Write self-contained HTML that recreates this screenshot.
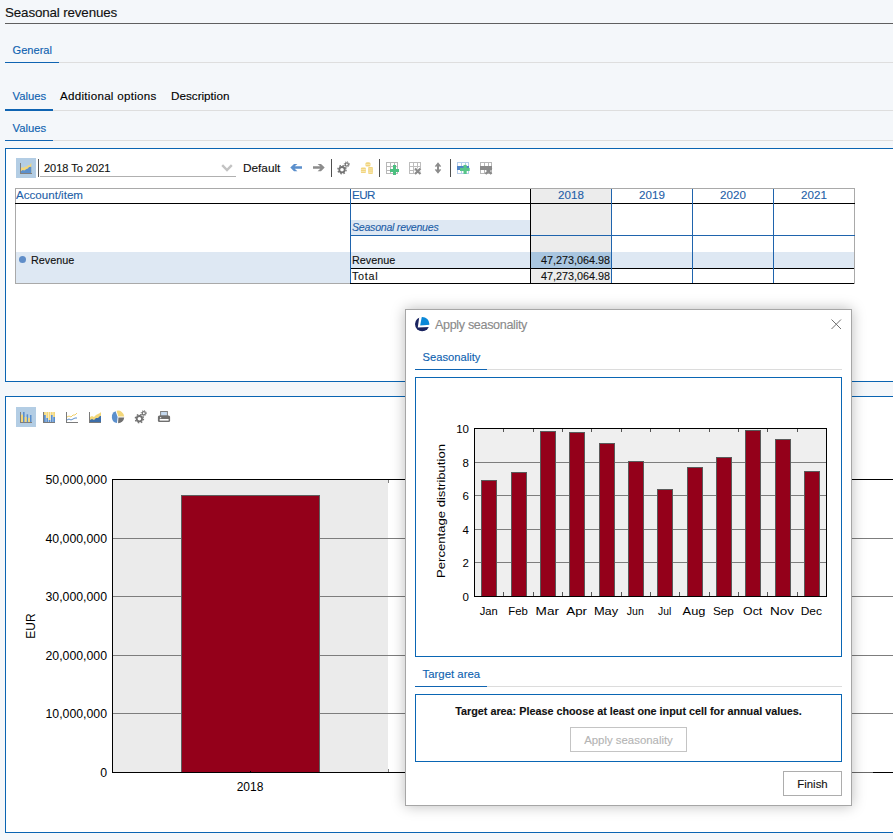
<!DOCTYPE html>
<html><head><meta charset="utf-8">
<style>
*{margin:0;padding:0;box-sizing:border-box}
html,body{width:893px;height:840px;overflow:hidden;background:#f4f7fa;font-family:"Liberation Sans",sans-serif;color:#111}
.a{position:absolute}
.t{position:absolute;white-space:pre;line-height:1;-webkit-text-stroke:0.12px currentColor}
.hl{position:absolute;height:1px}
.vl{position:absolute;width:1px}
.blue{color:#0e62b0}
</style></head><body>
<!-- header -->
<div class="t" style="left:5px;top:5.9px;font-size:13.4px;letter-spacing:-0.15px;color:#111">Seasonal revenues</div>
<div class="hl" style="left:5px;top:23px;width:888px;background:#5f5f5f"></div>

<div class="t blue" style="left:12.5px;top:44.5px;font-size:11.1px">General</div>
<div class="hl" style="left:5px;top:62px;width:888px;background:#dedede"></div>
<div class="hl" style="left:5px;top:62px;width:54px;background:#0f64b2"></div>

<div class="t blue" style="left:12.5px;top:90.5px;font-size:11.3px">Values</div>
<div class="t" style="left:60px;top:90.3px;font-size:11.6px;letter-spacing:0.28px;color:#000">Additional options</div>
<div class="t" style="left:171px;top:89.6px;font-size:11.7px;color:#000">Description</div>
<div class="hl" style="left:5px;top:110px;width:888px;background:#dedede"></div>
<div class="a" style="left:5px;top:109px;width:48px;height:2px;background:#0f64b2"></div>

<div class="t blue" style="left:12.5px;top:122.5px;font-size:11.3px">Values</div>
<div class="hl" style="left:5px;top:140px;width:888px;background:#dedede"></div>
<div class="hl" style="left:5px;top:140px;width:48px;background:#0f64b2"></div>

<!-- panel 1 -->
<div class="a" style="left:5px;top:148px;width:900px;height:234px;background:#fff;border:1px solid #0a64b2"></div>
<div class="a" style="left:16px;top:158px;width:20px;height:20px;background:#b3cde4"></div>
<div class="vl" style="left:38px;top:159px;height:18px;background:#555"></div>
<div class="t" style="left:44px;top:163.2px;font-size:11px">2018 To 2021</div>
<div class="hl" style="left:40px;top:176px;width:196px;background:#b0b0b0"></div>
<div class="t" style="left:243px;top:163.2px;font-size:11.8px">Default</div>

<!-- toolbar icons -->
<svg class="a" style="left:16px;top:158px" width="20" height="20">
<polygon points="5,10 6.5,9 7.8,10 9.5,8.3 11,9 12,7 13.5,7.5 15.3,4.8 15.3,15 5,15" fill="#f3d77a"/>
<polygon points="5,13.2 6.5,12 8.3,12.6 10.5,11 12,10.5 13,9 15.3,8.8 15.3,15 5,15" fill="#5b8fcc"/>
<rect x="4" y="5" width="1" height="11" fill="#7f7f7f" shape-rendering="crispEdges"/><rect x="4" y="15" width="12" height="1" fill="#7f7f7f" shape-rendering="crispEdges"/>
</svg>
<svg class="a" style="left:290px;top:163px" width="13" height="9" shape-rendering="auto">
<path d="M0.3 4.5 L4 0.9 H7.4 L4.7 3.2 H12 V5.8 H4.7 L7.4 8.3 H4 Z" fill="#5b8fcc"/>
</svg>
<svg class="a" style="left:313px;top:163px" width="13" height="9">
<path d="M11.7 4.5 L8 0.9 H4.6 L7.3 3.2 H0 V5.8 H7.3 L4.6 8.3 H8 Z" fill="#8c8c8c"/>
</svg>
<div class="vl" style="left:331px;top:159px;height:18px;background:#505050"></div>
<svg class="a" style="left:336px;top:160px" width="16" height="16">
<g fill="none" stroke="#737373">
<circle cx="6" cy="9.7" r="2.7" stroke-width="1.8"/>
<circle cx="6" cy="9.7" r="4.1" stroke-width="1.3" stroke-dasharray="1.6 1.62"/>
<circle cx="10.8" cy="4.4" r="1.6" stroke-width="1.2"/>
<circle cx="10.8" cy="4.4" r="2.6" stroke-width="1" stroke-dasharray="1 1.05"/>
</g></svg>
<svg class="a" style="left:359px;top:160px" width="16" height="16">
<g fill="#f1d57f">
<rect x="6.4" y="2.2" width="5.1" height="4.4" rx="1.5"/>
<rect x="1.9" y="7.6" width="5" height="5.5" rx="1.2"/>
<rect x="9.1" y="6.9" width="4.9" height="7.1" rx="1.2"/>
</g>
<g fill="#fbeec4">
<rect x="6.6" y="4" width="4.7" height="0.7"/>
<rect x="2.1" y="9.2" width="4.6" height="0.7"/><rect x="2.1" y="11.2" width="4.6" height="0.7"/>
<rect x="9.3" y="8.6" width="4.5" height="0.7"/><rect x="9.3" y="10.6" width="4.5" height="0.7"/><rect x="9.3" y="12.4" width="4.5" height="0.7"/>
</g></svg>
<div class="vl" style="left:379px;top:159px;height:18px;background:#505050"></div>
<svg class="a" style="left:386px;top:162px" width="14" height="14" shape-rendering="crispEdges">
<g fill="#b8b8b8"><rect x="0" y="0" width="12" height="1"/><rect x="0" y="4" width="12" height="1"/><rect x="0" y="8" width="12" height="1"/><rect x="0" y="11" width="12" height="1"/>
<rect x="0" y="0" width="1" height="12"/><rect x="4" y="0" width="1" height="12"/><rect x="8" y="0" width="1" height="12"/><rect x="11" y="0" width="1" height="12"/></g>
<rect x="7" y="3" width="3" height="10" fill="#4cbf80"/><rect x="4" y="6.5" width="9" height="3" fill="#4cbf80"/>
</svg>
<svg class="a" style="left:409px;top:162px" width="14" height="14">
<g fill="#bdbdbd" shape-rendering="crispEdges"><rect x="0" y="0" width="12" height="1"/><rect x="0" y="4" width="12" height="1"/><rect x="0" y="8" width="12" height="1"/><rect x="0" y="11" width="12" height="1"/>
<rect x="0" y="0" width="1" height="12"/><rect x="4" y="0" width="1" height="12"/><rect x="8" y="0" width="1" height="12"/><rect x="11" y="0" width="1" height="12"/></g>
<path d="M6 6.5 L11.5 12 M11.5 6.5 L6 12" stroke="#fff" stroke-width="3.6"/><path d="M6 6.5 L11.5 12 M11.5 6.5 L6 12" stroke="#8a8a8a" stroke-width="2.2"/>
</svg>
<svg class="a" style="left:434px;top:162px" width="8" height="12">
<path d="M4 0.3 L7.2 4.3 L5.9 5.1 L5 4.1 V7.9 L5.9 6.9 L7.2 7.7 L4 11.7 L0.8 7.7 L2.1 6.9 L3 7.9 V4.1 L2.1 5.1 L0.8 4.3 Z" fill="#8c8c8c"/>
</svg>
<div class="vl" style="left:450px;top:159px;height:18px;background:#505050"></div>
<svg class="a" style="left:457px;top:162px" width="14" height="14" shape-rendering="crispEdges">
<g fill="#b5cdea"><rect x="0" y="0" width="12" height="1"/><rect x="0" y="11" width="12" height="1"/>
<rect x="0" y="0" width="1" height="12"/><rect x="4" y="0" width="1" height="12"/><rect x="8" y="0" width="1" height="12"/><rect x="11" y="0" width="1" height="12"/></g>
<rect x="0" y="4" width="12" height="4" fill="#4f84c6"/>
<rect x="6.5" y="2.9" width="3.2" height="9.1" fill="#58c58a" shape-rendering="auto"/><rect x="3" y="5.9" width="9.7" height="3.1" fill="#58c58a" shape-rendering="auto"/>
</svg>
<svg class="a" style="left:480px;top:162px" width="14" height="14">
<g fill="#b8b8b8" shape-rendering="crispEdges"><rect x="0" y="0" width="12" height="1"/><rect x="0" y="11" width="12" height="1"/>
<rect x="0" y="0" width="1" height="12"/><rect x="4" y="0" width="1" height="12"/><rect x="8" y="0" width="1" height="12"/><rect x="11" y="0" width="1" height="12"/></g>
<rect x="0" y="4" width="12" height="4" fill="#8a8a8a" shape-rendering="crispEdges"/>
<path d="M5.5 6 L11.5 12 M11.5 6 L5.5 12" stroke="#8a8a8a" stroke-width="2.4"/>
</svg>
<svg class="a" style="left:221px;top:164px" width="12" height="8"><path d="M1.2 1.2 L6 6 L10.8 1.2" fill="none" stroke="#c3c3c3" stroke-width="2.4"/></svg>

<!-- table -->
<div class="a" style="left:15px;top:188px;width:840px;height:96px;border:1px solid #a9a9a9;background:#fff"></div>
<div class="a" style="left:531px;top:189px;width:80px;height:94px;background:#ececec"></div>
<div class="a" style="left:351px;top:220px;width:179px;height:15px;background:#dee8f3"></div>
<div class="a" style="left:16px;top:252px;width:838px;height:16px;background:#dee8f3"></div>
<div class="a" style="left:16px;top:268px;width:334px;height:15px;background:#dee8f3"></div>
<div class="a" style="left:531px;top:252px;width:80px;height:16px;background:#a9c6e0"></div>
<div class="hl" style="left:15px;top:203px;width:840px;background:#000"></div>
<div class="hl" style="left:350px;top:235px;width:505px;background:#1f64ad"></div>
<div class="hl" style="left:350px;top:268px;width:504px;background:#000"></div>
<div class="hl" style="left:350px;top:283px;width:504px;background:#000"></div>
<div class="vl" style="left:350px;top:189px;height:94px;background:#1f64ad"></div>
<div class="vl" style="left:530px;top:189px;height:94px;background:#000"></div>
<div class="vl" style="left:611px;top:189px;height:94px;background:#1f64ad"></div>
<div class="vl" style="left:692px;top:189px;height:94px;background:#1f64ad"></div>
<div class="vl" style="left:773px;top:189px;height:94px;background:#1f64ad"></div>
<div class="t" style="left:16px;top:189.3px;font-size:11.6px;color:#1f5fa8">Account/item</div>
<div class="t" style="left:352px;top:189.3px;font-size:11.6px;color:#1f5fa8;letter-spacing:-0.6px">EUR</div>
<div class="t" style="left:531px;top:189.3px;width:80px;text-align:center;font-size:11.6px;color:#1f5fa8">2018</div>
<div class="t" style="left:612px;top:189.3px;width:80px;text-align:center;font-size:11.6px;color:#1f5fa8">2019</div>
<div class="t" style="left:693px;top:189.3px;width:80px;text-align:center;font-size:11.6px;color:#1f5fa8">2020</div>
<div class="t" style="left:774px;top:189.3px;width:80px;text-align:center;font-size:11.6px;color:#1f5fa8">2021</div>
<div class="t" style="left:352px;top:222px;font-size:10.6px;font-style:italic;color:#1f5fa8;letter-spacing:-0.25px">Seasonal revenues</div>
<div class="a" style="left:18.5px;top:255.5px;width:7.5px;height:7.5px;border-radius:50%;background:#5f8dc8"></div>
<div class="t" style="left:31px;top:255px;font-size:10.8px">Revenue</div>
<div class="t" style="left:352px;top:255px;font-size:10.8px">Revenue</div>
<div class="t" style="left:352px;top:271px;font-size:10.8px;letter-spacing:0.7px">Total</div>
<div class="t" style="left:531px;top:255px;width:79px;text-align:right;font-size:10.8px">47,273,064.98</div>
<div class="t" style="left:531px;top:271px;width:79px;text-align:right;font-size:10.8px">47,273,064.98</div>

<!-- panel 2 -->
<div class="a" style="left:5px;top:396px;width:900px;height:437px;background:#fff;border:1px solid #0a64b2"></div>
<div class="a" style="left:16px;top:407px;width:20px;height:20px;background:#b3cde4"></div>
<svg class="a" style="left:16px;top:407px" width="180" height="20" shape-rendering="crispEdges">
<!-- bar chart icon -->
<g shape-rendering="auto">
<rect x="7" y="5" width="1.6" height="10" fill="#5b8fcc"/><rect x="5" y="7.7" width="2" height="7.3" fill="#f3d77a"/>
<rect x="10.6" y="7.3" width="1.5" height="7.7" fill="#5b8fcc"/><rect x="8.7" y="10" width="1.9" height="5" fill="#f3d77a"/>
<rect x="14" y="8" width="1.5" height="7" fill="#5b8fcc"/><rect x="12.1" y="10.9" width="1.9" height="4.1" fill="#f3d77a"/>
</g>
<rect x="4" y="5" width="1" height="11" fill="#7f7f7f"/><rect x="4" y="15" width="12" height="1" fill="#7f7f7f"/>
<!-- stacked -->
<rect x="27" y="5" width="1" height="11" fill="#7a7a7a"/><rect x="27" y="15" width="12" height="1" fill="#7a7a7a"/>
<rect x="28" y="5" width="1.8" height="3" fill="#f3d77a" shape-rendering="auto"/><rect x="28" y="8" width="1.8" height="7" fill="#5b8fcc" shape-rendering="auto"/>
<rect x="30.3" y="5" width="1.8" height="6" fill="#f3d77a" shape-rendering="auto"/><rect x="30.3" y="11" width="1.8" height="4" fill="#5b8fcc" shape-rendering="auto"/>
<rect x="32.6" y="5" width="1.8" height="8" fill="#f3d77a" shape-rendering="auto"/><rect x="32.6" y="13" width="1.8" height="2" fill="#5b8fcc" shape-rendering="auto"/>
<rect x="34.9" y="5" width="1.8" height="3" fill="#f3d77a" shape-rendering="auto"/><rect x="34.9" y="8" width="1.8" height="7" fill="#5b8fcc" shape-rendering="auto"/>
<rect x="37.2" y="5" width="1.8" height="5" fill="#f3d77a" shape-rendering="auto"/><rect x="37.2" y="10" width="1.8" height="5" fill="#5b8fcc" shape-rendering="auto"/>
<!-- line -->
<rect x="50" y="5" width="1" height="11" fill="#7a7a7a"/><rect x="50" y="15" width="12" height="1" fill="#7a7a7a"/>
<polyline points="51,10 53,9 55,10 57,8 59,8 61,6" fill="none" stroke="#f0cf6a" stroke-width="1" shape-rendering="auto"/>
<polyline points="51,13 53,12 55,13 57,12 59,11 61,11" fill="none" stroke="#5b8fcc" stroke-width="1" shape-rendering="auto"/>
<!-- area -->
<rect x="73" y="5" width="1" height="11" fill="#7a7a7a"/><rect x="73" y="15" width="12" height="1" fill="#7a7a7a"/>
<polygon points="74,10 76,9 78,10 80,8 82,7 84,6 85,5 85,15 74,15" fill="#f3d77a" shape-rendering="auto"/>
<polygon points="74,13 76,12 78,13 80,11 82,11 84,9 85,9 85,15 74,15" fill="#3d6ea9" shape-rendering="auto"/>
</svg>
<svg class="a" style="left:110px;top:409px" width="64" height="16">
<path d="M5.6 2.3 A6.2 6.2 0 0 0 7 14.1 L7.6 8 Z" fill="#5b8fcc"/>
<path d="M6.6 1.8 A6.2 6.2 0 0 1 14.2 7.6 L8.3 7.6 Z" fill="#f3d77a"/>
<path d="M8.4 8.5 L14.2 8.5 A6.2 6.2 0 0 1 8.1 14.2 Z" fill="#707070"/>
<g fill="none" stroke="#737373">
<circle cx="29.4" cy="9.7" r="2.7" stroke-width="1.8"/>
<circle cx="29.4" cy="9.7" r="4.1" stroke-width="1.3" stroke-dasharray="1.6 1.62"/>
<circle cx="33.8" cy="4.2" r="1.6" stroke-width="1.2"/>
<circle cx="33.8" cy="4.2" r="2.6" stroke-width="1" stroke-dasharray="1 1.05"/>
</g>
<rect x="50.6" y="2.5" width="6.8" height="4.5" fill="#c5daf0" stroke="#808080" stroke-width="1"/>
<rect x="47.9" y="6.4" width="12.2" height="6.6" rx="1.5" fill="#6f6f6f"/>
<rect x="49.7" y="10" width="8.9" height="1.6" fill="#fff"/>
<rect x="50" y="8.2" width="1.2" height="1" fill="#fff"/>
</svg>

<!-- main chart -->
<svg class="a" style="left:0;top:460px" width="893" height="340" shape-rendering="crispEdges" font-family="Liberation Sans" font-size="12">
<rect x="113" y="19" width="275" height="293" fill="#ebebeb"/>
<g fill="#7d7d7d">
<rect x="113" y="78" width="780" height="1"/>
<rect x="113" y="136" width="780" height="1"/>
<rect x="113" y="195" width="780" height="1"/>
<rect x="113" y="253" width="780" height="1"/>
</g>
<rect x="181" y="35" width="138" height="277" fill="#94001a" stroke="#5e5e5e" stroke-width="1" transform="translate(0.5 0.5)" shape-rendering="auto"/>
<rect x="112" y="19" width="781" height="1" fill="#000"/>
<rect x="112" y="312" width="781" height="1" fill="#000"/><rect x="852" y="312" width="21" height="1" fill="#6a6a6a"/>
<rect x="112" y="19" width="1" height="294" fill="#000"/>
<rect x="250" y="311" width="1" height="2" fill="#000"/>
<rect x="388" y="20" width="1" height="3" fill="#808080"/><rect x="388" y="309" width="1" height="3" fill="#808080"/>
<g text-anchor="end" fill="#000" shape-rendering="auto" font-size="12.3">
<text x="107" y="24">50,000,000</text>
<text x="107" y="83">40,000,000</text>
<text x="107" y="141">30,000,000</text>
<text x="107" y="200">20,000,000</text>
<text x="107" y="258">10,000,000</text>
<text x="107" y="317">0</text>
</g>
<text x="250" y="331" text-anchor="middle">2018</text>
<text transform="translate(35 166) rotate(-90)" text-anchor="middle">EUR</text>
</svg>

<!-- dialog -->
<div class="a" style="left:405px;top:309px;width:447px;height:497px;background:#fff;border:1px solid #a6a6a6;box-shadow:0 0 13px rgba(0,0,0,0.27)"></div>
<svg class="a" style="left:414px;top:316px" width="17" height="17">
<defs><clipPath id="lc"><circle cx="8.2" cy="8.1" r="7.2"/></clipPath></defs>
<g clip-path="url(#lc)">
<path d="M0 0 H5.4 L3.8 11.4 L17 10.9 V17 H0 Z" fill="#1a2460"/>
<path d="M7.9 0 H17 V8.8 L6.2 9.6 Z" fill="#0a88d8"/>
</g></svg>
<div class="t" style="left:435px;top:318.8px;font-size:12.6px;letter-spacing:-0.35px;color:#8a8a8a">Apply seasonality</div>
<svg class="a" style="left:831px;top:319px" width="11" height="11"><path d="M0.5 0.5 L10 10 M10 0.5 L0.5 10" stroke="#707070" stroke-width="1"/></svg>
<div class="t blue" style="left:422.5px;top:352px;font-size:11.2px">Seasonality</div>
<div class="hl" style="left:415px;top:369px;width:427px;background:#dcdcdc"></div>
<div class="hl" style="left:415px;top:369px;width:72px;background:#0f64b2"></div>
<div class="a" style="left:415px;top:377px;width:427px;height:280px;border:1px solid #0a66b4"></div>

<svg class="a" style="left:416px;top:378px" width="425" height="278" shape-rendering="crispEdges" font-family="Liberation Sans" font-size="11.5">
<g transform="translate(-416 -378)">
<rect x="474" y="428" width="352" height="168" fill="#efefef"/>
<g fill="#7d7d7d">
<rect x="474" y="462" width="352" height="1"/>
<rect x="474" y="495" width="352" height="1"/>
<rect x="474" y="529" width="352" height="1"/>
<rect x="474" y="562" width="352" height="1"/>
</g>
<rect x="481.5" y="480.5" width="15" height="116" fill="#94001a" stroke="#5a5a5a" shape-rendering="auto"/>
<rect x="511.5" y="472.5" width="15" height="124" fill="#94001a" stroke="#5a5a5a" shape-rendering="auto"/>
<rect x="540.5" y="431.5" width="15" height="165" fill="#94001a" stroke="#5a5a5a" shape-rendering="auto"/>
<rect x="569.5" y="432.5" width="15" height="164" fill="#94001a" stroke="#5a5a5a" shape-rendering="auto"/>
<rect x="599.5" y="443.5" width="15" height="153" fill="#94001a" stroke="#5a5a5a" shape-rendering="auto"/>
<rect x="628.5" y="461.5" width="15" height="135" fill="#94001a" stroke="#5a5a5a" shape-rendering="auto"/>
<rect x="657.5" y="489.5" width="15" height="107" fill="#94001a" stroke="#5a5a5a" shape-rendering="auto"/>
<rect x="687.5" y="467.5" width="15" height="129" fill="#94001a" stroke="#5a5a5a" shape-rendering="auto"/>
<rect x="716.5" y="457.5" width="15" height="139" fill="#94001a" stroke="#5a5a5a" shape-rendering="auto"/>
<rect x="745.5" y="430.5" width="15" height="166" fill="#94001a" stroke="#5a5a5a" shape-rendering="auto"/>
<rect x="775.5" y="439.5" width="15" height="157" fill="#94001a" stroke="#5a5a5a" shape-rendering="auto"/>
<rect x="804.5" y="471.5" width="15" height="125" fill="#94001a" stroke="#5a5a5a" shape-rendering="auto"/>
<rect x="474" y="428" width="353" height="1" fill="#000"/>
<rect x="474" y="596" width="353" height="1" fill="#000"/>
<rect x="474" y="428" width="1" height="169" fill="#000"/>
<rect x="826" y="428" width="1" height="169" fill="#000"/>
<rect x="503" y="429" width="1" height="3" fill="#555"/><rect x="503" y="592" width="1" height="4" fill="#555"/>
<rect x="533" y="429" width="1" height="3" fill="#555"/><rect x="533" y="592" width="1" height="4" fill="#555"/>
<rect x="562" y="429" width="1" height="3" fill="#555"/><rect x="562" y="592" width="1" height="4" fill="#555"/>
<rect x="591" y="429" width="1" height="3" fill="#555"/><rect x="591" y="592" width="1" height="4" fill="#555"/>
<rect x="621" y="429" width="1" height="3" fill="#555"/><rect x="621" y="592" width="1" height="4" fill="#555"/>
<rect x="650" y="429" width="1" height="3" fill="#555"/><rect x="650" y="592" width="1" height="4" fill="#555"/>
<rect x="679" y="429" width="1" height="3" fill="#555"/><rect x="679" y="592" width="1" height="4" fill="#555"/>
<rect x="709" y="429" width="1" height="3" fill="#555"/><rect x="709" y="592" width="1" height="4" fill="#555"/>
<rect x="738" y="429" width="1" height="3" fill="#555"/><rect x="738" y="592" width="1" height="4" fill="#555"/>
<rect x="767" y="429" width="1" height="3" fill="#555"/><rect x="767" y="592" width="1" height="4" fill="#555"/>
<rect x="797" y="429" width="1" height="3" fill="#555"/><rect x="797" y="592" width="1" height="4" fill="#555"/>

<g text-anchor="end" fill="#000" shape-rendering="auto" font-size="11.5">
<text x="469" y="433">10</text><text x="469" y="467">8</text><text x="469" y="500">6</text><text x="469" y="534">4</text><text x="469" y="567">2</text><text x="469" y="601">0</text>
</g>
<g text-anchor="middle" fill="#000" shape-rendering="auto" font-size="11.5">
<text x="479.7" y="615" text-anchor="start" textLength="18" lengthAdjust="spacingAndGlyphs">Jan</text><text x="508.2" y="615" text-anchor="start" textLength="19.6" lengthAdjust="spacingAndGlyphs">Feb</text><text x="535.6" y="615" text-anchor="start" textLength="23.4" lengthAdjust="spacingAndGlyphs">Mar</text><text x="566.2" y="615" text-anchor="start" textLength="20.9" lengthAdjust="spacingAndGlyphs">Apr</text><text x="593.9" y="615" text-anchor="start" textLength="24.3" lengthAdjust="spacingAndGlyphs">May</text><text x="626.8" y="615" text-anchor="start" textLength="17" lengthAdjust="spacingAndGlyphs">Jun</text><text x="658.1" y="615" text-anchor="start" textLength="13.2" lengthAdjust="spacingAndGlyphs">Jul</text><text x="682.6" y="615" text-anchor="start" textLength="22.8" lengthAdjust="spacingAndGlyphs">Aug</text><text x="712.9" y="615" text-anchor="start" textLength="20.9" lengthAdjust="spacingAndGlyphs">Sep</text><text x="743.1" y="615" text-anchor="start" textLength="19.1" lengthAdjust="spacingAndGlyphs">Oct</text><text x="770.0" y="615" text-anchor="start" textLength="24" lengthAdjust="spacingAndGlyphs">Nov</text><text x="800.7" y="615" text-anchor="start" textLength="21.3" lengthAdjust="spacingAndGlyphs">Dec</text></g>
<text transform="translate(444.5 511) rotate(-90)" text-anchor="middle" font-size="11.5" textLength="134" lengthAdjust="spacingAndGlyphs" shape-rendering="auto">Percentage distribution</text>
</g>
</svg>

<div class="t blue" style="left:422.5px;top:669px;font-size:11.4px">Target area</div>
<div class="hl" style="left:415px;top:686px;width:427px;background:#dcdcdc"></div>
<div class="hl" style="left:415px;top:686px;width:72px;background:#0f64b2"></div>
<div class="a" style="left:415px;top:694px;width:427px;height:68px;border:1px solid #0a66b4"></div>
<div class="t" style="left:415px;top:706px;width:427px;text-align:center;font-size:10.8px;font-weight:bold">Target area: Please choose at least one input cell for annual values.</div>
<div class="a" style="left:570px;top:727px;width:117px;height:25px;border:1px solid #c4c4c4;background:#fff"></div>
<div class="t" style="left:570px;top:735px;width:117px;text-align:center;font-size:11.4px;color:#b4b4b4">Apply seasonality</div>
<div class="a" style="left:783px;top:771px;width:59px;height:25px;border:1px solid #adadad;background:#fff"></div>
<div class="t" style="left:783px;top:779px;width:59px;text-align:center;font-size:11.4px;color:#111">Finish</div>
</body></html>
